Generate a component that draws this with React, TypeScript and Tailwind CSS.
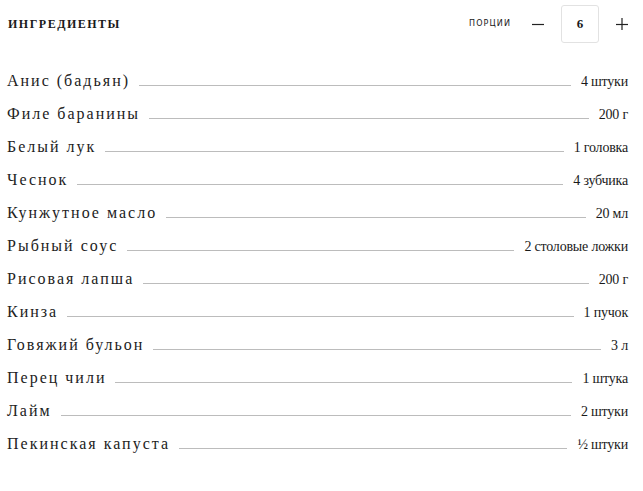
import React from "react";

const items: [string, string][] = [
  ["Анис (бадьян)", "4 штуки"],
  ["Филе баранины", "200 г"],
  ["Белый лук", "1 головка"],
  ["Чеснок", "4 зубчика"],
  ["Кунжутное масло", "20 мл"],
  ["Рыбный соус", "2 столовые ложки"],
  ["Рисовая лапша", "200 г"],
  ["Кинза", "1 пучок"],
  ["Говяжий бульон", "3 л"],
  ["Перец чили", "1 штука"],
  ["Лайм", "2 штуки"],
  ["Пекинская капуста", "½ штуки"],
];

export default function App() {
  return (
    <div className="w-[643px] h-[491px] bg-white text-[#1a1a1a] pl-[7px] pr-[15px] font-[family-name:'Liberation_Serif',serif]">
      <div className="flex h-12 items-center justify-between">
        <div className="font-bold text-[12px] tracking-[1.5px] pl-px">
          ИНГРЕДИЕНТЫ
        </div>
        <div className="flex items-center -mr-[13px]">
          <span className="font-[family-name:'DejaVu_Sans',sans-serif] text-[8px] tracking-[1.1px] mr-[8px]">
            ПОРЦИИ
          </span>
          <button className="w-[38px] h-[38px] flex items-center justify-center">
            <svg width="12" height="12" viewBox="0 0 12 12">
              <line x1="0" y1="6.5" x2="12" y2="6.5" stroke="#222" strokeWidth="1.2" />
            </svg>
          </button>
          <div className="ml-[4px] w-[38px] h-[38px] border border-[#e2e2e2] rounded-[3px] flex items-center justify-center font-bold text-[13px]">
            6
          </div>
          <button className="ml-[4px] w-[38px] h-[38px] flex items-center justify-center">
            <svg width="12" height="12" viewBox="0 0 12 12">
              <line x1="0" y1="6.5" x2="12" y2="6.5" stroke="#222" strokeWidth="1.2" />
              <line x1="6" y1="0" x2="6" y2="12" stroke="#222" strokeWidth="1.2" />
            </svg>
          </button>
        </div>
      </div>
      <div className="pt-4">
        {items.map(([name, amount]) => (
          <div key={name} className="flex items-baseline h-[33px] leading-[33px]">
            <span className="text-[16px] tracking-[2px] whitespace-nowrap text-[#222]">
              {name}
            </span>
            <div className="flex-1 h-px bg-[#bcbcbc] ml-[9px] mr-[10px]" />
            <span className="text-[14px] tracking-[-0.2px] whitespace-nowrap">
              {amount}
            </span>
          </div>
        ))}
      </div>
    </div>
  );
}
